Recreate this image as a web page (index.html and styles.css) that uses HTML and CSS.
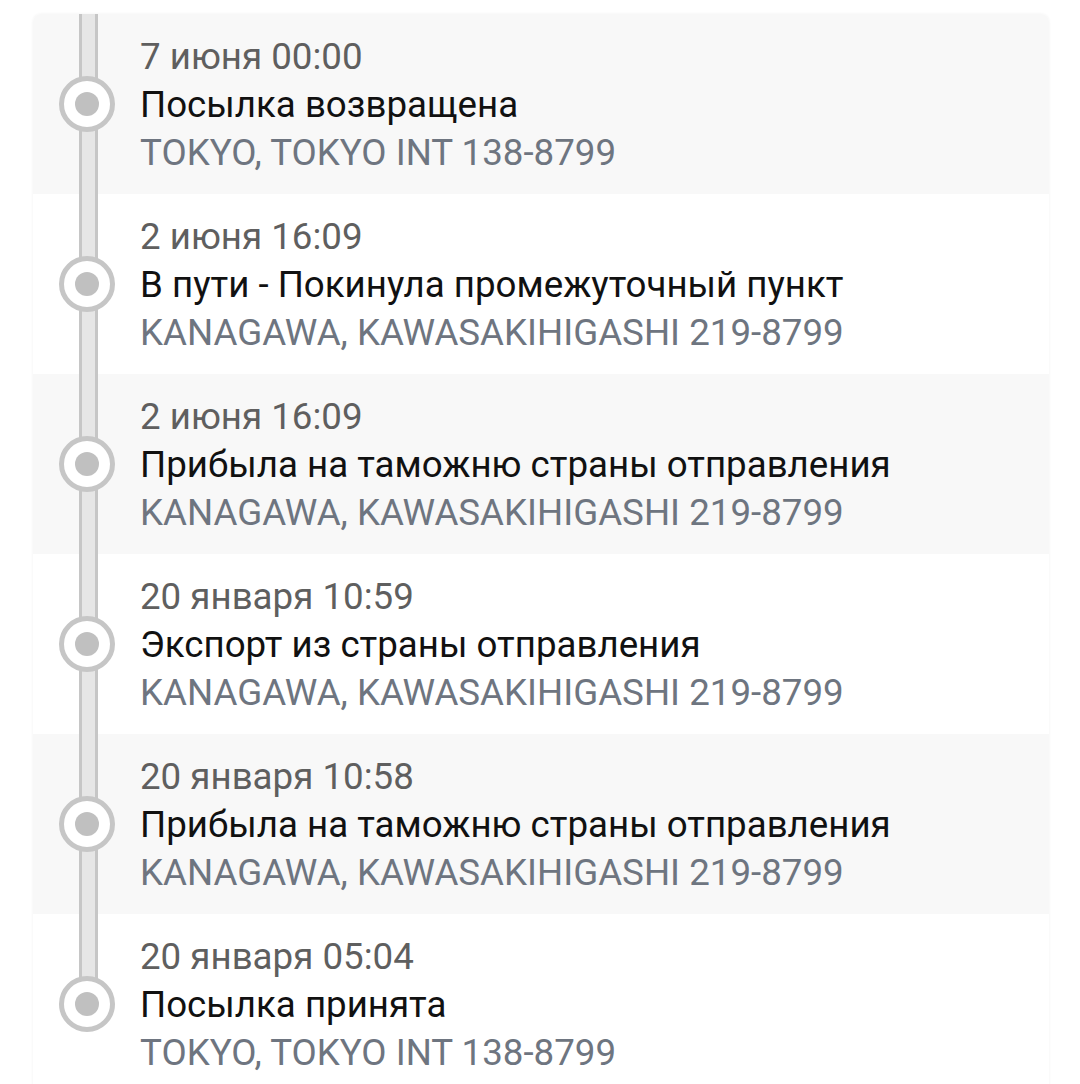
FILE: index.html
```html
<!DOCTYPE html>
<html lang="ru">
<head>
    <meta charset="UTF-8">
    <meta name="viewport" content="width=device-width, initial-scale=1.0">
    <title>Отслеживание посылки</title>
    <link rel="stylesheet" href="styles.css">
</head>
<body>

<div class="timeline">
    <div class="event">
        <div class="track"><span class="dot"></span></div>
        <div class="info">
            <p class="date">7 июня 00:00</p>
            <p class="status">Посылка возвращена</p>
            <p class="place">TOKYO, TOKYO INT 138-8799</p>
        </div>
    </div>
    <div class="event">
        <div class="track"><span class="dot"></span></div>
        <div class="info">
            <p class="date">2 июня 16:09</p>
            <p class="status">В пути - Покинула промежуточный пункт</p>
            <p class="place">KANAGAWA, KAWASAKIHIGASHI 219-8799</p>
        </div>
    </div>
    <div class="event">
        <div class="track"><span class="dot"></span></div>
        <div class="info">
            <p class="date">2 июня 16:09</p>
            <p class="status">Прибыла на таможню страны отправления</p>
            <p class="place">KANAGAWA, KAWASAKIHIGASHI 219-8799</p>
        </div>
    </div>
    <div class="event">
        <div class="track"><span class="dot"></span></div>
        <div class="info">
            <p class="date">20 января 10:59</p>
            <p class="status">Экспорт из страны отправления</p>
            <p class="place">KANAGAWA, KAWASAKIHIGASHI 219-8799</p>
        </div>
    </div>
    <div class="event">
        <div class="track"><span class="dot"></span></div>
        <div class="info">
            <p class="date">20 января 10:58</p>
            <p class="status">Прибыла на таможню страны отправления</p>
            <p class="place">KANAGAWA, KAWASAKIHIGASHI 219-8799</p>
        </div>
    </div>
    <div class="event">
        <div class="track"><span class="dot"></span></div>
        <div class="info">
            <p class="date">20 января 05:04</p>
            <p class="status">Посылка принята</p>
            <p class="place">TOKYO, TOKYO INT 138-8799</p>
        </div>
    </div>
</div>

</body>
</html>
```

FILE: styles.css
```css
* {
    margin: 0;
    padding: 0;
    box-sizing: border-box;
}

body {
    font-family: 'Roboto', 'Noto Sans', sans-serif;
    background-color: #fff;
    color: #111;
}

.timeline {
    width: 1016px;
    margin: 14px 0 0 33px;
    background-color: #fff;
    border-radius: 8px 8px 0 0;
    box-shadow: 0 0 3px rgba(0, 0, 0, 0.06);
    overflow: hidden;
}

.event {
    display: flex;
    height: 180px;
}

.event:nth-child(odd) {
    background-color: #f8f8f8;
}

.track {
    position: relative;
    width: 107px;
    flex-shrink: 0;
    display: flex;
    align-items: center;
    justify-content: center;
}

/* rail behind the dots */
.track::before {
    content: "";
    position: absolute;
    top: 0;
    bottom: 0;
    left: 46px;
    width: 13px;
    background-color: #e6e6e6;
    border-left: 3px solid #c6c6c6;
    border-right: 3px solid #c6c6c6;
}

.event:last-child .track::before {
    bottom: 50%;
}

.dot {
    position: relative;
    width: 56px;
    height: 56px;
    border-radius: 50%;
    border: 5px solid #c6c6c6;
    background-color: #fff;
    display: flex;
    align-items: center;
    justify-content: center;
}

.dot::after {
    content: "";
    width: 24px;
    height: 24px;
    border-radius: 50%;
    background-color: #c0c0c0;
}

.info {
    padding-top: 19px;
    font-size: 36.7px;
    line-height: 48px;
    white-space: nowrap;
}

.date {
    color: #5f5f5f;
}

.status {
    color: #111;
}

.place {
    color: #6e7580;
}
```
